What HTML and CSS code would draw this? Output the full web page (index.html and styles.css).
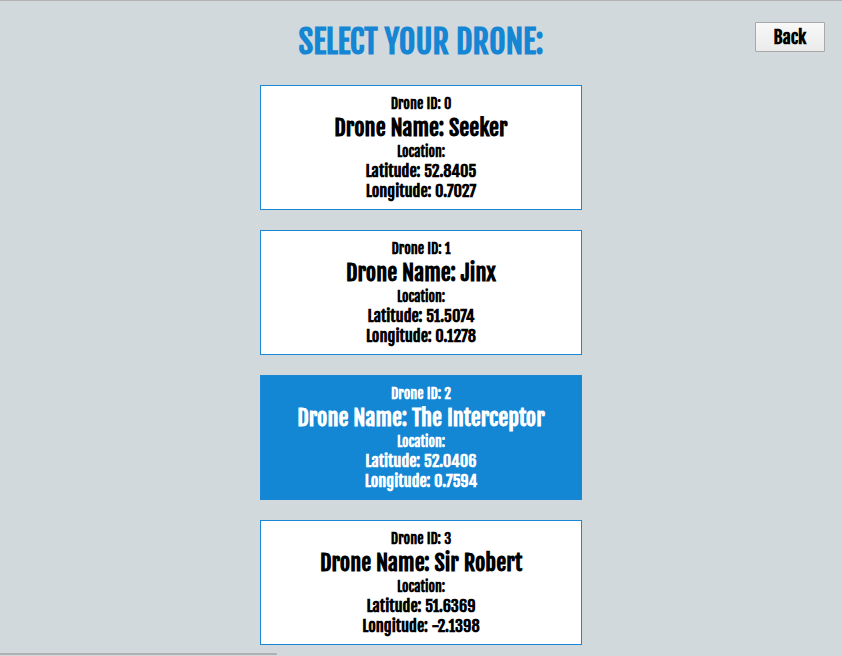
FILE: index.html
```html
<!DOCTYPE html>
<html lang="en">
<head>
<meta charset="utf-8">
<title>Select your drone</title>
<link rel="stylesheet" href="styles.css">
</head>
<body>
<div class="page">
  <header class="header">
    <div class="spacer"></div>
    <h1 class="title">SELECT YOUR DRONE:</h1>
    <div class="actions"><button class="back-btn" type="button">Back</button></div>
  </header>
  <main class="drone-list">
    <div class="drone-card">
      <div class="drone-id">Drone ID: 0</div>
      <div class="drone-name">Drone Name: Seeker</div>
      <div class="drone-label">Location:</div>
      <div class="drone-coord">Latitude: 52.8405</div>
      <div class="drone-coord">Longitude: 0.7027</div>
    </div>
    <div class="drone-card">
      <div class="drone-id">Drone ID: 1</div>
      <div class="drone-name">Drone Name: Jinx</div>
      <div class="drone-label">Location:</div>
      <div class="drone-coord">Latitude: 51.5074</div>
      <div class="drone-coord">Longitude: 0.1278</div>
    </div>
    <div class="drone-card selected">
      <div class="drone-id">Drone ID: 2</div>
      <div class="drone-name">Drone Name: The Interceptor</div>
      <div class="drone-label">Location:</div>
      <div class="drone-coord">Latitude: 52.0406</div>
      <div class="drone-coord">Longitude: 0.7594</div>
    </div>
    <div class="drone-card">
      <div class="drone-id">Drone ID: 3</div>
      <div class="drone-name">Drone Name: Sir Robert</div>
      <div class="drone-label">Location:</div>
      <div class="drone-coord">Latitude: 51.6369</div>
      <div class="drone-coord">Longitude: -2.1398</div>
    </div>
  </main>
</div>
<div class="scroll-thumb"></div>
</body>
</html>
```
FILE: styles.css
```css
* { box-sizing: border-box; }
html, body { margin: 0; padding: 0; height: 100%; overflow: hidden; }
body {
  background: #d2d9dc;
  font-family: "Fjalla One", "Oswald", "Roboto Condensed", sans-serif;
  font-weight: bold;
  color: #000;
}
.page {
  border-top: 1px solid #b3b3b3;
  height: 100%;
}
.header {
  display: grid;
  grid-template-columns: 1fr auto 1fr;
  align-items: start;
  padding-top: 21px;
  height: 84px;
}
.title {
  margin: 0;
  font-size: 32px;
  line-height: 40px;
  color: #1586d4;
  font-weight: bold;
}
.actions {
  display: flex;
  justify-content: flex-end;
  padding-right: 17px;
}
.back-btn {
  width: 70px;
  height: 30px;
  border: 1px solid #a8a8a8;
  border-radius: 1px;
  background: linear-gradient(#f8f8f8, #ebebeb);
  font-family: inherit;
  font-weight: bold;
  font-size: 18px;
  color: #000;
  padding: 0;
}
.drone-list {
  display: flex;
  flex-direction: column;
  align-items: center;
  gap: 20px;
}
.drone-card {
  width: 322px;
  height: 125px;
  background: #fff;
  border: 1px solid #1a87d6;
  padding-top: 10px;
  text-align: center;
}
.drone-card.selected {
  background: #1386d4;
  color: #fff;
}
.drone-id { font-size: 14.3px; line-height: 17px; }
.drone-name { font-size: 22.4px; line-height: 29px; }
.drone-label { font-size: 14px; line-height: 19px; }
.drone-coord { font-size: 16.4px; line-height: 20px; }
.scroll-thumb {
  position: fixed;
  left: 0;
  bottom: 1px;
  width: 277px;
  height: 2px;
  background: #b0b0b0;
  border-radius: 0 1px 1px 0;
}
```
